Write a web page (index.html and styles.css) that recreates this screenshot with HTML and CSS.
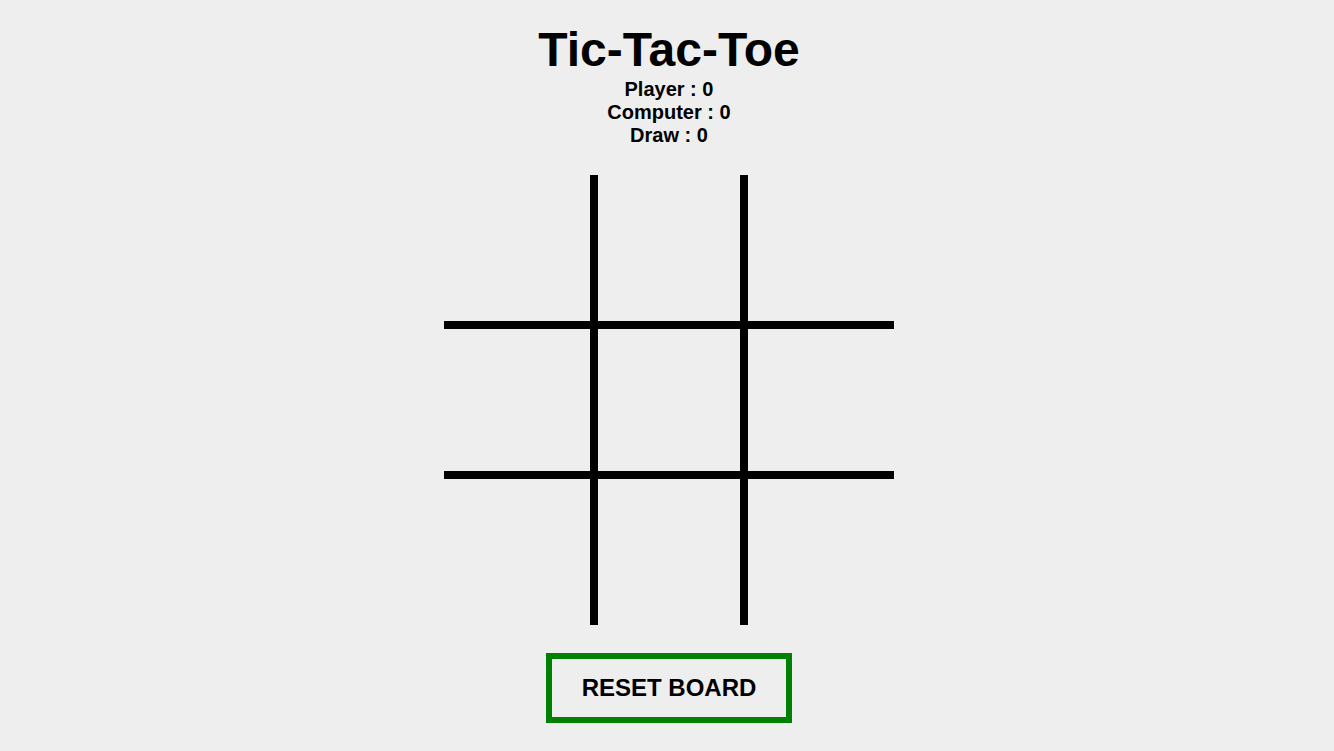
FILE: index.html
```html
<!DOCTYPE html>
<html>
<head>
<meta charset="utf-8">
<title>Tic-Tac-Toe</title>
<link rel="stylesheet" href="styles.css">
</head>
<body>
<main class="app">
  <h1 class="title">Tic-Tac-Toe</h1>
  <div class="scores">
    <div class="score">Player : 0</div>
    <div class="score">Computer : 0</div>
    <div class="score">Draw : 0</div>
  </div>
  <div class="board">
    <div class="cell c0 r0"></div>
    <div class="cell c1 r0"></div>
    <div class="cell c2 r0"></div>
    <div class="cell c0 r1"></div>
    <div class="cell c1 r1"></div>
    <div class="cell c2 r1"></div>
    <div class="cell c0 r2"></div>
    <div class="cell c1 r2"></div>
    <div class="cell c2 r2"></div>
  </div>
  <button class="reset">RESET BOARD</button>
</main>
</body>
</html>
```
FILE: styles.css
```css
html, body {
  margin: 0;
  padding: 0;
  background: #eeeeee;
}
body {
  font-family: "Liberation Sans", Arial, sans-serif;
  color: #000;
}
.app {
  display: flex;
  flex-direction: column;
  align-items: center;
  padding-left: 4px;
}
.title {
  margin: 22px 0 0;
  font-size: 48px;
  line-height: 56px;
  font-weight: bold;
}
.scores {
  display: flex;
  flex-direction: column;
  align-items: center;
  font-weight: bold;
  font-size: 20px;
  line-height: 23px;
}
.board {
  margin-top: 28px;
  display: grid;
  grid-template-columns: repeat(3, 150px);
  grid-template-rows: repeat(3, 150px);
}
.cell {
  box-sizing: border-box;
  border: 0 solid #000;
}
.c0 { border-right-width: 4px; }
.c1 { border-left-width: 4px; border-right-width: 4px; }
.c2 { border-left-width: 4px; }
.r0 { border-bottom-width: 4px; }
.r1 { border-top-width: 4px; border-bottom-width: 4px; }
.r2 { border-top-width: 4px; }
.reset {
  margin-top: 28px;
  box-sizing: border-box;
  width: 246px;
  height: 70px;
  border: 6px solid #008000;
  background: transparent;
  font-family: "Liberation Sans", Arial, sans-serif;
  font-weight: bold;
  font-size: 24px;
  color: #000;
  padding: 0;
}
```
